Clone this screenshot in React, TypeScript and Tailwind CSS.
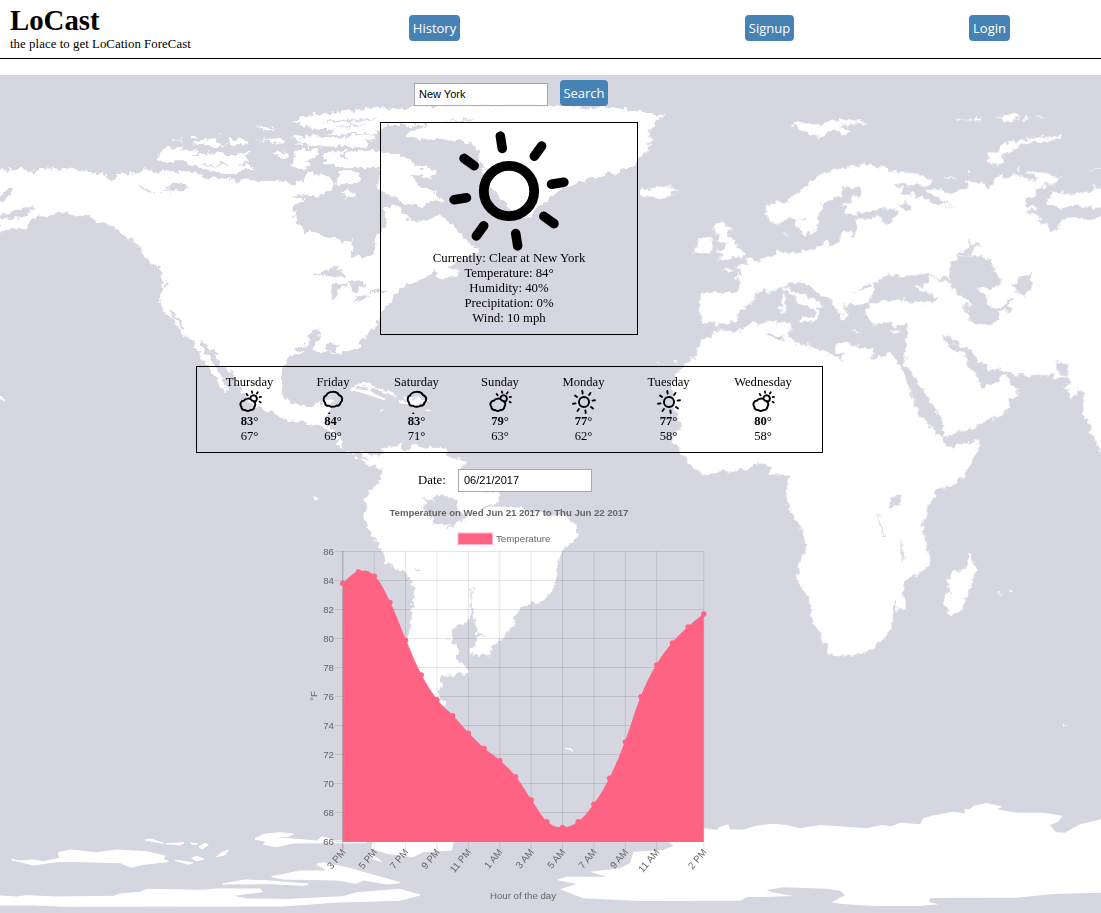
import React from "react";

const SERIF = "font-['Liberation_Serif',serif]";

/* ---------- world map ---------- */

const EAST = [
  // Eurasia
  "M182,655 L240,651 290,652 300,640 298,620 283,603 305,598 303,588 285,575 325,570 315,556 330,550 352,556 380,548 405,540 410,530 450,535 480,528 500,534 520,520 560,495 570,515 600,500 600,485 610,465 632,472 635,490 650,470 650,435 672,428 690,435 700,425 720,420 728,440 745,450 755,430 775,420 770,402 740,398 700,405 670,415 625,418 608,390 630,378 660,360 665,345 655,335 640,340 605,335 600,360 570,378 545,390 540,420 525,430 533,445 530,465 495,482 480,462 465,440 450,430 420,447 385,440 388,425 375,415 375,395 410,380 440,378 480,350 490,335 515,318 540,300 565,288 600,280 640,276 670,266 700,270 735,275 750,288 780,292 830,295 878,315 878,325 860,332 800,330 750,325 785,340 785,358 800,365 820,350 828,362 850,370 900,390 915,388 957,405 905,378 900,370 870,355 862,345 905,340 910,350 925,358 950,345 985,340 978,320 990,315 1005,325 1030,325 1040,345 1060,325 1070,305 1140,300 1180,318 1195,308 1160,290 1172,286 1195,295 1215,290 1240,300 1265,308 1245,328 1215,325 1210,345 1180,345 1190,360 1160,370 1152,388 1195,398 1160,412 1205,430 1190,435 1225,452 1232,472 1255,458 1270,430 1300,425 1345,435 1383,430 1383,1140 1355,1065 1330,1005 1328,950 1312,940 1310,965 1290,965 1285,945 1270,935 1295,925 1282,905 1250,910 1235,900 1140,900 1100,893 1085,880 1045,885 1020,860 985,820 960,812 925,780 907,780 912,800 940,825 970,835 985,870 1010,905 1025,940 1050,925 1075,925 1095,895 1110,925 1135,945 1135,960 1110,970 1105,1000 1080,1020 1030,1040 1000,1058 930,1080 912,1082 905,1040 890,1005 850,945 820,900 790,868 800,800 806,740 770,755 735,742 700,750 690,730 672,712 690,690 740,680 790,672 840,685 895,668 820,632 862,630 865,600 800,605 740,600 710,620 700,645 692,662 690,683 650,685 670,690 610,688 625,720 615,745 600,715 585,705 575,672 540,660 510,635 490,618 460,625 430,632 470,655 500,660 550,692 530,700 540,712 520,742 485,735 485,728 515,728 528,710 500,690 475,680 440,645 425,635 400,648 385,658 370,642 345,655 345,675 320,690 300,705 290,738 260,742 228,750 222,738 183,742 187,725 175,705 183,690Z",
  // Africa
  "M220,762 L235,768 300,767 330,745 380,742 450,742 455,760 440,780 470,805 515,810 520,822 560,828 590,848 612,860 605,835 585,825 590,805 620,800 650,815 700,820 705,835 680,858 740,838 755,838 785,880 805,930 830,1005 865,1045 905,1090 925,1117 960,1110 1018,1095 1015,1125 990,1170 970,1205 940,1232 900,1240 882,1250 880,1275 865,1290 862,1320 848,1340 850,1375 865,1420 870,1470 845,1493 800,1512 785,1545 797,1580 795,1605 775,1605 765,1575 755,1655 730,1690 700,1720 670,1735 640,1738 580,1745 562,1725 540,1670 520,1650 508,1580 485,1535 470,1510 480,1455 497,1430 495,1400 485,1360 450,1305 438,1265 447,1205 430,1200 385,1197 398,1170 345,1165 330,1180 270,1193 240,1188 195,1200 165,1185 145,1165 130,1135 100,1105 100,1075 130,1055 108,1020 96,965 105,900 165,845 170,815 190,795 220,782Z",
  // Iceland, British Isles, northern islands
  "M-2,340 L20,343 50,335 90,335 112,347 95,358 45,370 0,362Z",
  "M218,472 L225,445 258,442 255,455 275,460 258,480 285,495 295,525 318,535 305,545 260,548 230,558 250,540 232,528 255,518 258,500 235,500 240,480Z",
  "M160,535 L175,515 165,502 185,488 218,490 218,522 190,535Z",
  "M452,148 L500,142 530,150 560,138 620,135 680,140 665,148 590,150 638,172 620,178 580,165 540,188 500,172Z",
  "M1035,255 L1050,238 1075,225 1095,205 1150,192 1262,182 1265,190 1170,203 1130,218 1085,240 1090,268 1060,265Z",
  "M940,130 L980,135 1020,128 1025,135 960,137Z M1065,125 L1130,118 1135,130 1100,138Z M1140,130 L1172,128 1160,136Z M1182,125 L1218,127 1200,130Z",
  "M428,660 L437,658 435,710 422,712 425,685Z M635,765 L670,769 645,772Z M755,768 L785,765 765,778Z",
  "M1215,385 L1240,350 1300,358 1345,350 1365,335 1383,340 1383,400 1300,392 1270,402Z M1345,285 L1383,280 1383,286Z M985,290 L997,292 985,297Z M915,302 L952,308 930,310Z M1128,275 L1148,283 1130,282Z",
  "M240,580 L285,585 265,593Z M0,123 L35,120 70,127 50,133 40,150 20,155 30,170 0,175Z M0,185 L40,190 25,205 35,215 15,228 0,232Z M430,478 L442,475 440,482Z M1085,310 L1120,300 1110,318Z",
  // Madagascar and specks
  "M993,1432 L1000,1455 1010,1480 998,1510 970,1600 960,1612 935,1620 918,1610 912,1575 930,1545 922,1515 940,1495 975,1478Z",
  "M1077,1555 l8,0 0,5 -8,0Z M1106,1544 l7,0 -2,5 -6,0Z M1268,1947 l12,5 0,6 -10,0Z M1050,1087 l15,0 -8,4Z M55,860 l8,5 -8,2Z M102,858 l14,-4 -8,12Z",
];

const EAST_ICE = [
  "M100,2255 L190,2260 230,2265 240,2255 265,2248 270,2263 310,2264 345,2253 400,2246 440,2250 480,2260 540,2250 680,2260 725,2250 755,2254 780,2243 840,2248 850,2230 875,2222 940,2210 975,2215 973,2202 990,2203 1000,2193 1040,2184 1088,2195 1070,2203 1130,2213 1210,2213 1267,2222 1255,2240 1230,2250 1248,2272 1275,2273 1320,2248 1383,2233 1383,2453 1240,2457 1130,2468 870,2469 868,2482 897,2488 840,2493 700,2493 600,2486 575,2482 615,2460 600,2447 560,2441 430,2437 380,2445 395,2452 460,2463 320,2467 300,2477 0,2478 -170,2470 -240,2443 -190,2427 -250,2415 -220,2405 -100,2405 -150,2390 -60,2380 -30,2365 -20,2330 70,2325 100,2312 85,2300Z",
];

const EAST_WATER = [
  "M693,670 L700,650 700,625 740,600 800,605 865,598 862,630 820,630 800,625 770,628 790,640 815,640 830,636 895,668 880,682 850,687 780,672 740,676 700,684Z",
  "M928,600 L930,570 950,543 1030,540 1060,568 1065,592 1085,610 1075,635 1045,640 1015,637 1040,665 1042,685 1075,710 1075,738 1040,750 990,740 985,715 965,692 998,690 960,658 932,638Z",
  "M1120,625 L1145,608 1182,588 1170,612 1178,635 1155,660 1122,650Z M1110,665 L1120,675 1105,690 1112,710 1100,716 1098,705 1060,710 1095,690Z",
  "M775,390 L790,378 812,395 805,405Z M475,435 L500,430 495,440Z M748,1265 L760,1258 788,1262 778,1290 750,1298Z",
  "M712,1310 L722,1345 738,1383 733,1382 716,1345Z M780,1395 L788,1410 795,1458 788,1455Z M383,775 L430,785 428,795 395,790Z M1248,862 L1282,865 1285,900 1255,900Z",
  "M925,575 L885,598 820,596 930,612 927,625 875,605Z M985,490 L990,515 950,540 985,542 1005,515 1035,518 1000,505Z M1260,400 L1383,410 1383,402Z M620,645 L650,648 690,625 688,640 655,652Z",
];

const WEST = [
  // North and Central America
  "M0,284 L60,282 100,288 120,280 225,281 270,290 320,300 335,322 350,308 345,297 400,295 430,283 455,290 520,286 560,292 610,300 620,310 690,312 715,325 720,312 780,318 860,320 885,328 910,310 930,288 960,305 985,300 1010,330 985,350 960,362 900,358 868,362 915,370 905,382 880,392 884,435 905,455 910,472 940,470 965,478 985,488 1020,490 1025,503 1058,495 1055,535 1080,550 1122,543 1128,505 1120,500 1145,470 1160,440 1155,400 1185,385 1225,430 1260,440 1300,430 1320,412 1340,435 1375,470 1400,495 1432,525 1415,545 1370,560 1320,580 1290,600 1250,620 1200,640 1170,680 1140,715 1130,755 1090,790 1060,828 1030,832 950,830 938,828 960,790 955,765 930,770 925,800 915,830 880,838 850,870 845,930 850,955 870,985 905,990 940,1000 962,975 990,970 996,985 975,1035 985,1050 1015,1080 1030,1120 1070,1155 1130,1150 1150,1170 1145,1185 1100,1165 1060,1140 1010,1110 1000,1075 950,1050 880,1040 840,1025 780,1000 750,985 715,930 690,890 660,865 645,835 610,800 598,790 610,825 650,880 670,915 690,950 675,955 640,900 605,850 580,795 550,780 520,740 505,722 485,700 483,660 490,610 478,583 430,550 435,540 410,510 385,490 350,460 320,440 300,440 260,422 200,412 140,422 100,430 80,455 60,465 35,455 0,472 0,425 40,435 75,420 110,400 90,395 0,420Z",
  // Arctic archipelago
  "M470,250 L490,225 500,218 530,222 600,228 570,245 600,238 650,235 720,240 710,230 755,230 735,238 750,262 715,265 765,278 730,290 690,297 610,283 560,262 530,255 500,265Z",
  "M520,194 L540,188 550,196Z M570,190 L583,182 590,190Z M575,205 L610,193 650,195 660,210 690,212 690,188 740,200 740,207 690,213 610,212Z M760,155 L800,153 828,166 790,163Z M765,195 L840,190 852,200 835,208 800,198Z M648,172 l12,1 -5,3Z",
  "M875,138 L915,123 945,125 935,118 1000,113 1030,108 1100,102 1145,98 1180,97 1180,130 1145,160 1115,178 990,178 1000,165 960,165Z",
  "M870,183 L960,185 1000,188 1130,178 1125,190 1090,198 1108,207 1095,217 935,213 920,205 880,190Z M880,208 L905,203 910,212Z",
  "M885,225 L950,225 955,235 915,260 935,275 905,285 875,270 880,262Z M965,255 L975,232 1020,228 1140,228 1200,240 1260,275 1300,285 1310,295 1295,310 1270,302 1230,300 1250,325 1270,340 1310,355 1330,375 1295,378 1270,395 1220,385 1170,365 1135,340 1140,275 1090,277 1030,277 985,268Z M815,230 L840,235 860,228 872,245 835,250Z",
  "M1010,325 L1020,288 1040,285 1080,295 1080,315 1065,328 1030,328Z M1030,345 L1050,348 1072,360 1055,365 1028,368Z",
  // Greenland
  "M1130,122 L1190,100 1310,92 1500,88 1700,92 1850,100 1990,120 1980,135 1940,165 1950,190 1925,215 1935,225 1908,262 1860,290 1800,300 1740,320 1690,340 1650,370 1610,395 1590,430 1560,425 1530,400 1490,360 1460,320 1445,270 1435,225 1395,200 1330,192 1260,195 1215,180 1235,165 1290,150 1200,150 1150,150Z",
  "M1310,590 L1335,560 1350,578 1385,590 1365,605 1330,612 1310,605Z",
  // Caribbean
  "M1045,942 L1090,922 1130,935 1180,950 1195,970 1150,950 1090,935Z M1195,975 L1260,970 1290,985 1250,990 1200,985Z M1130,1003 l25,2 -10,5Z M1278,1000 l25,3 -20,4Z M0,965 l12,8 6,10 -10,-3 -8,-8Z",
];

const WEST_ICE = [
  "M35,2354 L60,2358 100,2355 130,2360 180,2350 175,2333 210,2325 290,2333 350,2325 440,2330 495,2343 490,2352 505,2360 430,2368 395,2377 360,2363 240,2360 170,2360 100,2370Z",
  "M435,2295 L455,2293 490,2305Z M498,2306 L552,2303 540,2310Z M572,2304 l22,2 -15,3Z M597,2315 L615,2305 625,2310 605,2322Z M525,2356 L578,2363 565,2368Z M575,2350 L590,2344 612,2352 590,2358Z M650,2345 L665,2333 685,2325 675,2340Z",
  "M765,2292 L790,2278 840,2273 880,2277 870,2283 815,2287 950,2298 965,2286 985,2290 1000,2298 1100,2298 1100,2303 880,2304 830,2315 790,2308 800,2300Z",
  "M668,2427 L735,2415 810,2418 925,2427 910,2431 810,2426Z",
  "M815,2405 L900,2388 985,2388 950,2368 970,2363 1040,2378 1090,2392 1200,2423 1160,2427 1090,2415 1070,2425 1010,2415 850,2412Z M1120,2300 L1360,2300 1355,2325 1270,2330 1240,2345 1160,2335 1115,2320Z M1110,2335 L1145,2360 1115,2350Z",
  "M0,2463 L50,2466 80,2462 170,2466 340,2464 360,2457 420,2452 440,2443 600,2446 650,2442 780,2442 788,2450 695,2462 740,2472 870,2473 1030,2465 1070,2453 1200,2443 1260,2460 1200,2476 1000,2482 850,2493 200,2494 100,2490 0,2490Z",
];

const WEST_WATER = [
  "M935,606 L960,595 990,578 1015,580 1035,600 1035,610 1000,605 985,597Z M993,640 L1005,625 1045,618 1020,640 1010,670 997,678Z M1040,618 L1095,620 1100,632 1080,638 1068,657 1055,640Z M1055,675 L1110,662 1080,680Z M1108,650 L1145,645 1160,650 1115,655Z",
  "M475,355 L510,342 490,335 540,325 570,335 535,348 500,350Z M510,703 L522,715 552,758 545,760 515,725Z M0,365 L30,338 40,342 10,380 0,380Z M415,333 L475,355 430,345Z M495,620 l8,2 -2,12 -6,-3Z",
  "M930,829 L905,800 912,815 880,825Z M975,829 L990,795 1000,815 1015,805 1005,828Z M1015,240 L1050,228 1035,245 1045,262Z M600,270 L680,265 690,270 610,273Z",
  "M950,140 L1060,135 1130,128 1130,133 1050,142Z M1000,153 L1100,148 1060,156Z M1225,238 L1290,250 1270,256Z M1320,140 L1420,133 1400,140Z",
];

const SOUTH = [
  // South America and the isthmus
  "M180,335 L230,345 235,355 245,330 280,318 310,308 300,330 320,335 345,310 365,325 435,320 440,350 500,365 480,385 490,400 500,440 560,455 600,460 598,475 570,495 530,505 620,500 700,515 760,525 800,530 830,555 832,590 800,620 775,650 775,690 765,730 750,765 725,785 680,795 655,812 640,830 640,860 618,880 590,905 565,945 515,945 512,925 535,905 525,850 515,790 505,840 475,860 460,870 458,900 475,925 470,950 485,970 512,1000 440,1005 420,1010 430,1040 415,1050 425,1075 440,1110 400,1110 300,1000 300,950 325,890 335,830 342,760 335,715 310,695 260,670 250,640 205,560 188,520 200,500 190,480 205,462 240,420 247,390 235,365 190,350Z",
];

const SOUTH_WATER = [
  "M365,500 L385,490 370,475 400,480 405,465 440,465 470,480 468,512 500,530 470,545 440,555 400,550 390,520Z M440,575 L455,545 500,535 460,555Z M343,683 l17,12 -4,3 -13,-8Z M517,730 l3,0 -8,75 -3,0Z M530,880 L560,885 525,890Z M440,895 l10,2 -5,4Z",
];

const ISLES = "M150,150 L158,145 210,152 225,162 260,178 250,180 190,160Z M794,1223 l18,2 8,8 -2,3 -8,-7 -14,-3Z M40,468 l18,8 -14,6Z";

function Land({ paths, fill }: { paths: string[]; fill: string }) {
  return (
    <>
      {paths.map((d, i) => (
        <path key={i} d={d} fill={fill} />
      ))}
    </>
  );
}

const WATER = "#d6d6e0";

function WorldMap() {
  return (
    <svg className="absolute inset-0 h-full w-full" viewBox="0 75 1101 838" aria-hidden="true">
      <defs>
        <filter id="coast" filterUnits="userSpaceOnUse" x="0" y="75" width="1101" height="838" colorInterpolationFilters="sRGB">
          <feTurbulence type="fractalNoise" baseFrequency=".16" numOctaves="3" seed="4" />
          <feDisplacementMap in="SourceGraphic" scale="9" xChannelSelector="R" yChannelSelector="G" />
        </filter>
      </defs>
      <g filter="url(#coast)">
        <g transform="translate(0 75) scale(.33333)">
          <Land paths={WEST} fill="#fff" />
          <Land paths={WEST_WATER} fill={WATER} />
        </g>
        <g transform="translate(300 340) scale(.33333)">
          <Land paths={SOUTH} fill="#fff" />
          <Land paths={SOUTH_WATER} fill={WATER} />
        </g>
        <g transform="translate(640 75) scale(.33333)">
          <Land paths={EAST} fill="#fff" />
          <path d="M1370,425V1110L1440,1110V425Z M1370,345V398H1440V345Z" fill="#fff" />
          <Land paths={EAST_WATER} fill={WATER} />
        </g>
      </g>
      <g transform="translate(0 75) scale(.33333)" strokeLinejoin="round" stroke="#fff" strokeWidth="3">
        <Land paths={WEST_ICE} fill="#fff" />
        <path d="M0,284V420L8,418V284Z" stroke="none" fill="#fff" />
        <path d="M0,365 L30,338 40,342 10,380 0,380Z" stroke="none" fill={WATER} />
      </g>
      <g transform="translate(640 75) scale(.33333)">
        <Land paths={EAST_ICE} fill="#fff" />
      </g>
      <path d={ISLES} fill="#fff" transform="translate(300 340) scale(.33333)" />
    </svg>
  );
}

/* ---------- weather icons ---------- */

function Sun({ className }: { className: string }) {
  return (
    <svg className={className} viewBox="0 0 120 120" fill="none" stroke="#000" strokeLinecap="round">
      <circle cx="60" cy="60" r="25.2" strokeWidth="9.8" />
      {[0, 45, 90, 135, 180, 225, 270, 315].map((a) => (
        <path key={a} d="M60 17V4.4" strokeWidth="9.5" transform={`rotate(${a - 9} 60 60)`} />
      ))}
    </svg>
  );
}

function PartlyCloudy() {
  return (
    <svg className="h-6 w-6" viewBox="0 0 24 24" fill="none" stroke="#000" strokeWidth="2" strokeLinecap="round">
      <path d="M6 10.600C7.300 8 12.500 8 13.800 10.400C17 10.600 18.400 14.500 16.400 16.800C16.300 19 14.600 20.300 12.600 20C11.300 21.200 8.300 21.200 7 20C4.800 20.300 3.400 19 3.400 17C1.300 14.800 2.400 11 6 10.600Z" />
      <path d="M12.400 7.900C13 5.200 16.500 4.400 18.200 6.500C19.700 8.600 18.700 11.400 16.200 11.700" />
      <path d="M8.700 4L9.600 5.200M13.900 1.400L14.200 2.900M19.700 2.200L18.900 3.500M23 6.900L21.700 7.100M22.700 12.400L21.600 11.700" strokeWidth="1.800" />
    </svg>
  );
}

function Drizzle() {
  return (
    <svg className="h-6 w-6" viewBox="0 0 24 24" fill="none" stroke="#000" strokeWidth="2" strokeLinejoin="round">
      <path d="M8 15.800C5.500 16 4 14.800 4 12.600C1.800 10.500 2.200 6.300 5.400 5.200C7.200 1 15.900 .6 17.900 5C21.700 6.300 22.300 10.500 19.500 12.800C19 15 17.600 15.800 15.600 15.600C14 17.200 10 17.200 8 15.800Z" />
      <path d="M8.300 22.600L7.500 24H9.100Z" fill="#000" strokeWidth=".8" />
    </svg>
  );
}

/* ---------- header, search, forecast ---------- */

function Button({ children, className = "" }: { children: React.ReactNode; className?: string }) {
  return (
    <button
      className={`h-[26px] shrink-0 whitespace-nowrap rounded-[4px] bg-[#4682b4] text-center font-['Open_Sans',sans-serif] text-[13px] leading-[26px] text-white ${className}`}
    >
      {children}
    </button>
  );
}

const FORECAST = [
  { day: "Thursday", icon: "partly", high: 83, low: 67, width: "w-[83px]" },
  { day: "Friday", icon: "rain", high: 84, low: 69, width: "w-[84px]" },
  { day: "Saturday", icon: "rain", high: 83, low: 71, width: "w-[83px]" },
  { day: "Sunday", icon: "partly", high: 79, low: 63, width: "w-[84px]" },
  { day: "Monday", icon: "sun", high: 77, low: 62, width: "w-[83px]" },
  { day: "Tuesday", icon: "sun", high: 77, low: 58, width: "w-[87px]" },
  { day: "Wednesday", icon: "partly", high: 80, low: 58, width: "w-[102px]" },
];

function Forecast() {
  return (
    <section className="mt-[31px] ml-[196px] flex h-[87px] w-[627px] border border-black pt-2 pl-[11px] text-center text-[12.6px]">
      {FORECAST.map((f) => (
        <div key={f.day} className={`flex shrink-0 flex-col items-center ${f.width}`}>
          <div>{f.day}</div>
          {f.icon === "sun" ? <Sun className="h-6 w-6" /> : f.icon === "rain" ? <Drizzle /> : <PartlyCloudy />}
          <div>
            <b>{f.high}</b>°
          </div>
          <div>{f.low}°</div>
        </div>
      ))}
    </section>
  );
}

/* ---------- chart ---------- */

const TEMPS = [
  83.8, 84.6, 84.3, 82.5, 79.9, 77.5, 75.8, 74.7, 73.5, 72.45, 71.6, 70.5, 68.9, 67.4, 67, 67.4, 68.6, 70.4, 72.9, 76,
  78.2, 79.7, 80.8, 81.7,
];
const LEFT = 42.8;
const STEP = 361 / 23;
const px = (i: number) => LEFT + i * STEP;
const py = (t: number) => 49.5 + (86 - t) * 14.53;

const HOURS: [string, number][] = [
  ["3 PM", 0],
  ["5 PM", 2],
  ["7 PM", 4],
  ["9 PM", 6],
  ["11 PM", 8],
  ["1 AM", 10],
  ["3 AM", 12],
  ["5 AM", 14],
  ["7 AM", 16],
  ["9 AM", 18],
  ["11 AM", 20],
  ["2 PM", 23],
];

function curve() {
  const pts = TEMPS.map((t, i) => [px(i), py(t)]);
  let d = `M${pts[0][0]},${pts[0][1]}`;
  for (let i = 0; i < pts.length - 1; i++) {
    const p0 = pts[Math.max(i - 1, 0)];
    const p1 = pts[i];
    const p2 = pts[i + 1];
    const p3 = pts[Math.min(i + 2, pts.length - 1)];
    d += ` C${p1[0] + (p2[0] - p0[0]) / 5},${p1[1] + (p2[1] - p0[1]) / 5} ${p2[0] - (p3[0] - p1[0]) / 5},${
      p2[1] - (p3[1] - p1[1]) / 5
    } ${p2[0]},${p2[1]}`;
  }
  return d;
}

function Chart() {
  const line = curve();
  return (
    <svg
      className="mt-[10px] ml-[300px] block h-[411px] w-[420px] font-['Liberation_Sans',sans-serif]"
      viewBox="0 0 420 411"
      fontSize="9.7"
      fill="#666"
    >
      <text x="89.500" y="14" fontWeight="bold" fontSize="9.7" textLength="239">
        Temperature on Wed Jun 21 2017 to Thu Jun 22 2017
      </text>
      <rect x="158" y="31" width="34.500" height="11.500" fill="#ff6384" stroke="#ffb3c4" />
      <text x="196" y="40.300" textLength="54.500">
        Temperature
      </text>
      {Array.from({ length: 11 }, (_, i) => 86 - i * 2).map((t) => (
        <g key={t}>
          <path d={`M35 ${Math.round(py(t)) - 0.5}H404`} stroke="#000" strokeOpacity=".1" />
          <text x="34" y={py(t) + 3.2} textAnchor="end">
            {t}
          </text>
        </g>
      ))}
      {HOURS.map(([label, i]) => (
        <g key={label}>
          <path d={`M${px(i)} 49V348`} stroke="#000" strokeOpacity={i === 0 ? 0.25 : 0.1} />
          <text transform={`translate(${px(i) + 1} 348.5) rotate(-50)`} textAnchor="end" y="3">
            {label}
          </text>
        </g>
      ))}
      <path d={`${line} L${px(23)},340 L${px(0)},340 Z`} fill="#ff6384" />
      <path d={line} fill="none" stroke="#ff6384" strokeWidth="1" />
      {TEMPS.map((t, i) => (
        <circle key={i} cx={px(i)} cy={py(t)} r="2.700" fill="#ff6384" />
      ))}
      <text transform="translate(16.500 194) rotate(-90)" textAnchor="middle">
        °F
      </text>
      <text x="190" y="397" textLength="66">
        Hour of the day
      </text>
    </svg>
  );
}

export default function App() {
  return (
    <div className={`h-[913px] w-[1101px] overflow-hidden bg-white text-[12.8px] leading-[15px] text-black ${SERIF}`}>
      <header className="flex h-[59px] border-b border-black">
        <div className="w-[399px] shrink-0 pt-1 pl-[10px]">
          <h1 className="text-[28.800px] leading-[32px] font-bold">LoCast</h1>
          <p className="mt-px tracking-[0.06px]">the place to get LoCation ForeCast</p>
        </div>
        <nav className="flex pt-[15px] pl-[10px]">
          <Button className="w-[51px]">History</Button>
          <Button className="ml-[285px] w-[49px]">Signup</Button>
          <Button className="ml-[175px] w-[41px]">Login</Button>
        </nav>
      </header>
      <main className="relative mt-4 h-[838px] bg-[#d6d6e0]">
        <WorldMap />
        <div className="relative">
          <form className="flex pt-[5px] pl-[414px]" onSubmit={(e) => e.preventDefault()}>
            <input
              className="mt-[3px] h-[23px] w-[134px] border border-[#a9a9a9] bg-white px-1 pb-0.5 font-['Liberation_Sans',sans-serif] text-[11px]"
              defaultValue="New York"
            />
            <Button className="ml-3 w-12">Search</Button>
          </form>
          <section className="mt-4 ml-[380px] flex h-[213px] w-[258px] flex-col items-center border border-black pt-2 text-center">
            <Sun className="h-[120px] w-[120px] shrink-0" />
            <p className="tracking-[0.06px]">Currently: Clear at New York</p>
            <p>Temperature: 84°</p>
            <p>Humidity: 40%</p>
            <p>Precipitation: 0%</p>
            <p>Wind: 10 mph</p>
          </section>
          <Forecast />
          <label className="mt-4 ml-[418px] flex h-[23px] items-center">
            <span className="w-10">Date:</span>
            <input
              className="h-[23px] w-[134px] border border-[#a9a9a9] bg-white px-[5px] pb-0.5 font-['Liberation_Sans',sans-serif] text-[11px]"
              defaultValue="06/21/2017"
            />
          </label>
          <Chart />
        </div>
      </main>
    </div>
  );
}
